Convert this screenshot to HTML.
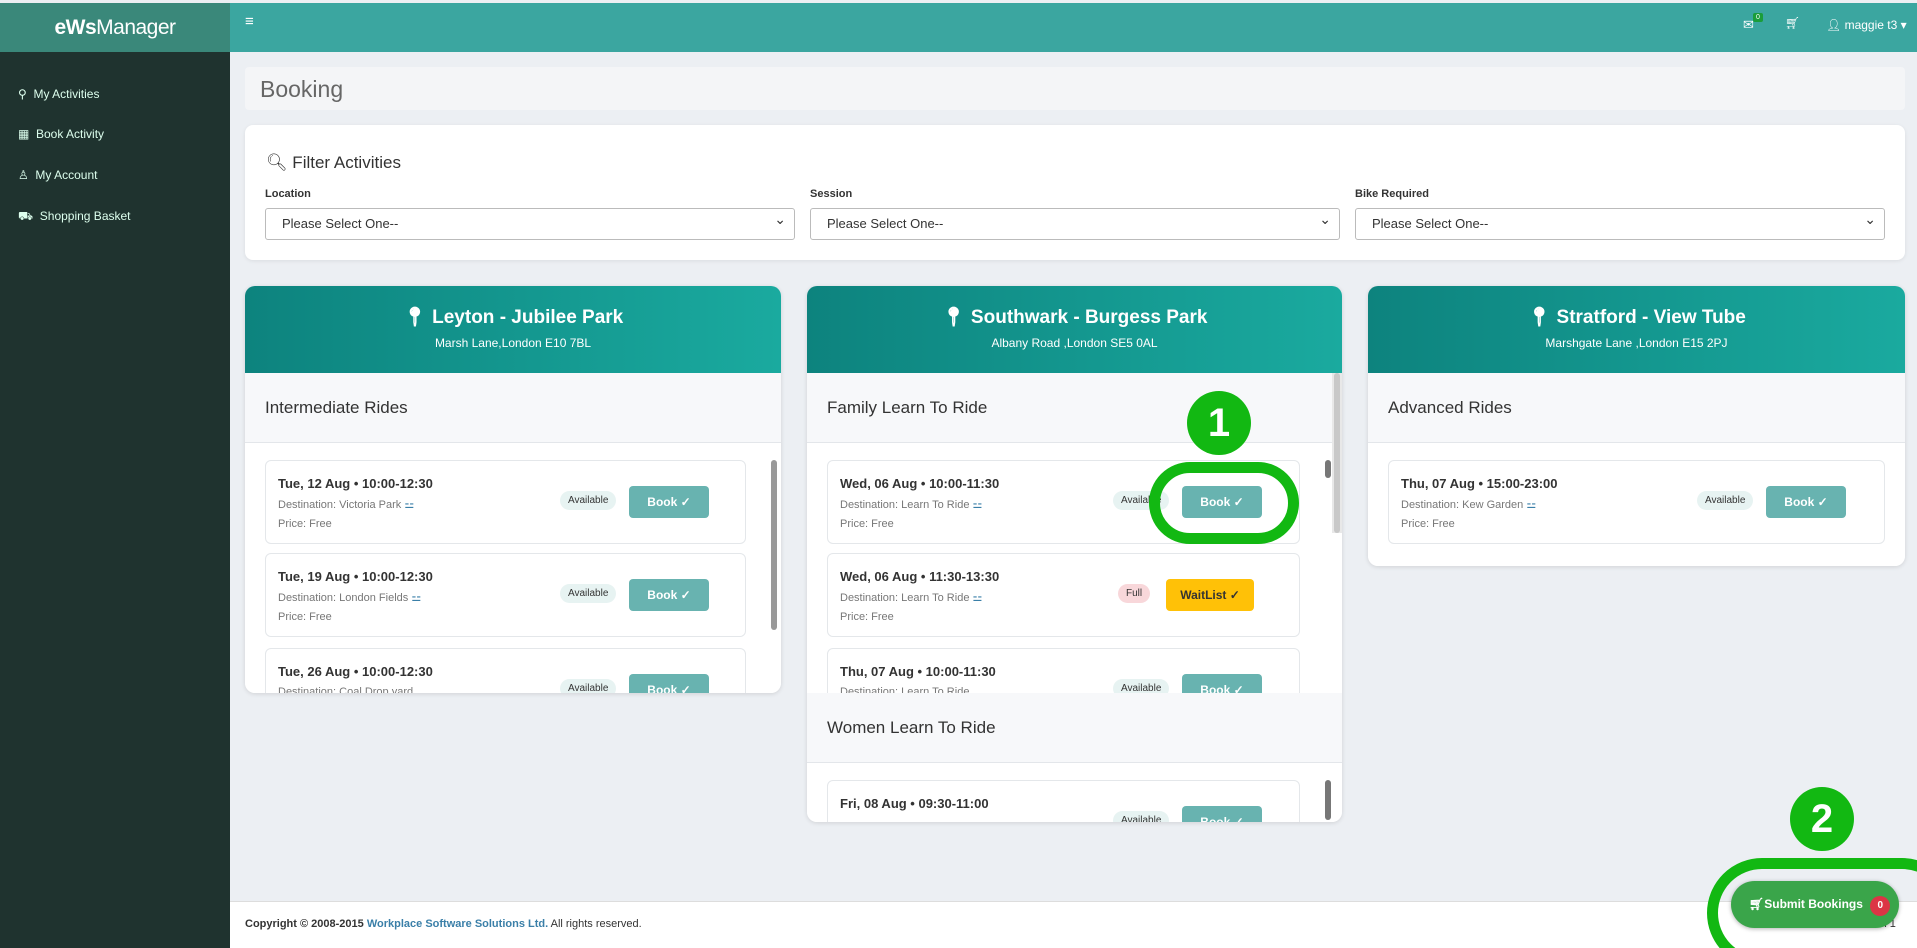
<!DOCTYPE html>
<html><head><meta charset="utf-8"><style>
*{box-sizing:border-box;margin:0;padding:0}
html,body{width:1917px;height:948px;overflow:hidden}
body{background:#eceff3;font-family:"Liberation Sans",sans-serif;position:relative;color:#333}
.a{position:absolute}
.side{left:0;top:3px;width:230px;height:945px;background:#1f332f}
.logo{left:0;top:3px;width:230px;height:49px;background:#3a887a;color:#fff;font-size:21px;text-align:center;line-height:49px;letter-spacing:-.5px}
.top{left:230px;top:3px;width:1687px;height:49px;background:#3ba6a0}
.nav{color:#dfe;font-size:12px;left:38px}
.card{background:#fff;border-radius:8px;box-shadow:0 1px 4px rgba(0,0,0,.08)}
.sel{height:32px;border:1px solid #bbb;border-radius:3px;font-size:13px;line-height:30px;padding-left:16px;color:#333;background:#fff}
.sel:after{content:"⌄";position:absolute;right:8px;top:-5px;font-size:14px}
.lbl{font-size:11px;font-weight:bold}
.loc{border-radius:10px;overflow:hidden;background:#f7f8fa;box-shadow:0 1px 5px rgba(0,0,0,.12)}
.lh{height:87px;background:linear-gradient(90deg,#0d837e,#1aaa9f);color:#fff;text-align:center}
.lh b{display:block;font-size:19px;padding-top:19px}
.lh span{display:block;font-size:12px;margin-top:7px}
.sec{font-size:17px;color:#333;padding-left:20px;height:70px;line-height:70px;border-bottom:1px solid #e3e6ea}
.item{position:absolute;left:20px;width:481px;height:84px;background:#fff;border:1px solid #e4e7ea;border-radius:6px}
.item .d{position:absolute;left:12px;top:15px;font-size:13px;font-weight:bold;color:#333}
.item .s{position:absolute;left:12px;top:37px;font-size:11px;color:#777}
.item .p{position:absolute;left:12px;top:57px;font-size:11px;color:#777}
.pill{position:absolute;top:30px;font-size:10px;padding:4px 8px;border-radius:10px;background:#e7f3f2;color:#333}
.btn{position:absolute;top:25px;width:80px;height:32px;border-radius:4px;background:#68b3b0;color:#fff;font-size:12px;font-weight:bold;text-align:center;line-height:32px}
.sb{position:absolute;width:6px;background:#999;border-radius:3px}
.num{border-radius:50%;background:#12b812;color:#fff;font-size:40px;font-weight:bold;text-align:center}
.list{position:relative;background:#fff;overflow:hidden}
</style></head><body>
<div class="a side"></div>
<div class="a logo"><b>eWs</b>Manager</div>
<div class="a top"></div>
<div class="a" style="left:245px;top:13px;color:#fff;font-size:15px">≡</div>
<div class="a" style="left:1743px;top:17px;color:#fff;font-size:13px">✉</div>
<div class="a" style="left:1753px;top:13px;background:#1a9d3a;color:#fff;font-size:7px;padding:1px 3px;border-radius:2px">0</div>
<div class="a" style="left:1785px;top:16px;color:#fff;font-size:12px">🛒︎</div>
<div class="a" style="left:1826px;top:18px;color:#fff;font-size:12px">👤︎ maggie t3 ▾</div>
<div class="a nav" style="top:87px;left:18px">⚲&nbsp; My Activities</div>
<div class="a nav" style="top:127px;left:18px">▦&nbsp; Book Activity</div>
<div class="a nav" style="top:168px;left:18px">♙&nbsp; My Account</div>
<div class="a nav" style="top:209px;left:18px">⛟&nbsp; Shopping Basket</div>

<div class="a" style="left:245px;top:67px;width:1660px;height:43px;background:#f4f5f7;border-radius:4px;font-size:23px;color:#666;padding:9px 15px">Booking</div>
<div class="a card" style="left:245px;top:125px;width:1660px;height:135px"></div>
<div class="a" style="left:266px;top:153px;font-size:17px;color:#333">🔍︎ Filter Activities</div>
<div class="a lbl" style="left:265px;top:188px">Location</div>
<div class="a lbl" style="left:810px;top:188px">Session</div>
<div class="a lbl" style="left:1355px;top:188px">Bike Required</div>
<div class="a sel" style="left:265px;top:208px;width:530px">Please Select One--</div>
<div class="a sel" style="left:810px;top:208px;width:530px">Please Select One--</div>
<div class="a sel" style="left:1355px;top:208px;width:530px">Please Select One--</div>

<!-- Leyton -->
<div class="a loc" style="left:245px;top:286px;width:536px;height:407px">
<div class="lh"><b>📍︎ Leyton - Jubilee Park</b><span>Marsh Lane,London E10 7BL</span></div>
<div class="sec">Intermediate Rides</div>
<div class="list" style="height:250px">
<div class="item" style="top:17px"><div class="d">Tue, 12 Aug • 10:00-12:30</div><div class="s">Destination: Victoria Park <span style="color:#3a7fa8">⚍</span></div><div class="p">Price: Free</div><div class="pill" style="left:294px">Available</div><div class="btn" style="left:363px">Book ✓</div></div>
<div class="item" style="top:110px"><div class="d">Tue, 19 Aug • 10:00-12:30</div><div class="s">Destination: London Fields <span style="color:#3a7fa8">⚍</span></div><div class="p">Price: Free</div><div class="pill" style="left:294px">Available</div><div class="btn" style="left:363px">Book ✓</div></div>
<div class="item" style="top:205px"><div class="d">Tue, 26 Aug • 10:00-12:30</div><div class="s">Destination: Coal Drop yard</div><div class="pill" style="left:294px">Available</div><div class="btn" style="left:363px">Book ✓</div></div>
<div class="sb" style="left:526px;top:17px;height:170px"></div>
</div></div>

<!-- Southwark -->
<div class="a loc" style="left:807px;top:286px;width:535px;height:536px">
<div class="lh"><b>📍︎ Southwark - Burgess Park</b><span>Albany Road ,London SE5 0AL</span></div>
<div class="sec">Family Learn To Ride</div>
<div class="list" style="height:250px">
<div class="item" style="top:17px;width:473px"><div class="d">Wed, 06 Aug • 10:00-11:30</div><div class="s">Destination: Learn To Ride <span style="color:#3a7fa8">⚍</span></div><div class="p">Price: Free</div><div class="pill" style="left:285px">Available</div><div class="btn" style="left:354px">Book ✓</div></div>
<div class="item" style="top:110px;width:473px"><div class="d">Wed, 06 Aug • 11:30-13:30</div><div class="s">Destination: Learn To Ride <span style="color:#3a7fa8">⚍</span></div><div class="p">Price: Free</div><div class="pill" style="left:290px;background:#f8d7da">Full</div><div class="btn" style="left:338px;width:88px;background:#ffc107;color:#333">WaitList ✓</div></div>
<div class="item" style="top:205px;width:473px"><div class="d">Thu, 07 Aug • 10:00-11:30</div><div class="s">Destination: Learn To Ride</div><div class="pill" style="left:285px">Available</div><div class="btn" style="left:354px">Book ✓</div></div>
<div class="sb" style="left:518px;top:17px;height:18px;background:#777"></div>
</div>
<div class="sec" style="background:#f7f8fa">Women Learn To Ride</div>
<div class="list" style="height:60px">
<div class="item" style="top:17px;width:473px"><div class="d">Fri, 08 Aug • 09:30-11:00</div><div class="pill" style="left:285px">Available</div><div class="btn" style="left:354px">Book ✓</div></div>
<div class="sb" style="left:518px;top:17px;height:40px;background:#777"></div>
</div>
<div style="position:absolute;right:0;top:87px;width:10px;height:160px;background:#e8e8e8"><div style="margin:0 2px;height:160px;background:#c8c8c8;border-radius:3px"></div></div>
</div>

<!-- Stratford -->
<div class="a loc" style="left:1368px;top:286px;width:537px;height:280px">
<div class="lh"><b>📍︎ Stratford - View Tube</b><span>Marshgate Lane ,London E15 2PJ</span></div>
<div class="sec">Advanced Rides</div>
<div class="list" style="height:123px">
<div class="item" style="top:17px;width:497px"><div class="d">Thu, 07 Aug • 15:00-23:00</div><div class="s">Destination: Kew Garden <span style="color:#3a7fa8">⚍</span></div><div class="p">Price: Free</div><div class="pill" style="left:308px">Available</div><div class="btn" style="left:377px">Book ✓</div></div>
</div></div>

<!-- footer -->
<div class="a" style="left:230px;top:901px;width:1687px;height:47px;background:#fff;border-top:1px solid #ddd"></div>
<div class="a" style="left:245px;top:918px;font-size:11px;color:#333"><b>Copyright © 2008-2015 <span style="color:#3a7fa8">Workplace Software Solutions Ltd.</span></b> All rights reserved.</div>
<div class="a" style="left:1850px;top:918px;font-size:11px;color:#333">Version 1</div>

<!-- annotations -->
<div class="a num" style="left:1187px;top:391px;width:64px;height:64px;line-height:64px">1</div>
<div class="a" style="left:1149px;top:462px;width:150px;height:82px;border:11px solid #12b812;border-radius:41px"></div>
<div class="a num" style="left:1790px;top:787px;width:64px;height:64px;line-height:64px">2</div>
<div class="a" style="left:1731px;top:881px;width:168px;height:47px;border-radius:24px;background:#3aa54a;color:#fff;font-size:12px;font-weight:bold;line-height:47px;padding-left:18px;white-space:nowrap;box-shadow:0 1px 4px rgba(0,0,0,.3)">🛒︎Submit Bookings <span style="display:inline-block;width:20px;height:20px;border-radius:50%;background:#dc3545;text-align:center;line-height:20px;font-size:10px;margin-left:4px">0</span></div>
<div class="a" style="left:1700px;top:850px;width:217px;height:98px;overflow:hidden">
<div style="position:absolute;left:7px;top:8px;width:250px;height:110px;border:11px solid #12b812;border-radius:55px"></div>
</div>
</body></html>
